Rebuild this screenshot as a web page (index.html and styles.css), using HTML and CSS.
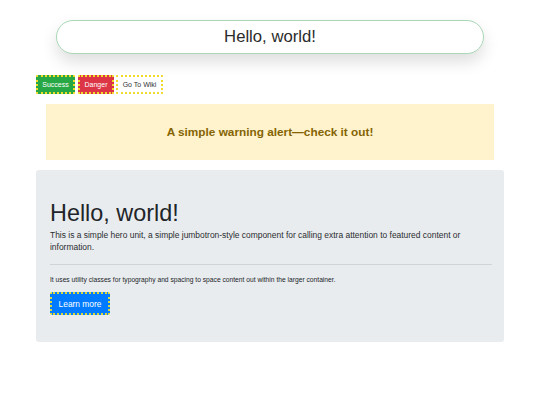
FILE: index.html
```html
<!DOCTYPE html>
<html lang="en">
<head>
    <meta charset="UTF-8">
    <meta name="viewport" content="width=device-width, initial-scale=1.0">
    <title>Hello, world!</title>
    <link rel="stylesheet" href="styles.css">
</head>
<body>

    <!-- Title box -->
    <div class="title-wrap">
        <div class="title-box">Hello, world!</div>
    </div>

    <!-- Buttons -->
    <div class="btn-row">
        <button class="btn btn-success">Success</button>
        <button class="btn btn-danger">Danger</button>
        <button class="btn btn-light">Go To Wiki</button>
    </div>

    <!-- Alert -->
    <div class="alert-warning">A simple warning alert&mdash;check it out!</div>

    <!-- Jumbotron -->
    <div class="jumbotron">
        <h1>Hello, world!</h1>
        <p class="lead">This is a simple hero unit, a simple jumbotron-style component for calling extra attention to featured content or information.</p>
        <hr>
        <p class="small">It uses utility classes for typography and spacing to space content out within the larger container.</p>
        <button class="btn-primary">Learn more</button>
    </div>

</body>
</html>
```

FILE: styles.css
```css
body {
    font-family: "Liberation Sans", Arial, sans-serif;
    margin: 0;
    padding: 0;
    background-color: #fff;
    color: #212529;
}

/* Title box */
.title-wrap {
    padding: 20px 56px 0;
}

.title-box {
    height: 32px;
    line-height: 32px;
    border: 1px solid #a9d8b6;
    border-radius: 17px;
    text-align: center;
    font-size: 16.7px;
    color: #2b2b2b;
    background-color: #fff;
    box-shadow: 0 8px 16px rgba(0, 0, 0, 0.13);
}

/* Buttons */
.btn-row {
    display: flex;
    gap: 3px;
    margin: 21px 0 0 36px;
}

.btn {
    font-family: inherit;
    font-size: 7px;
    height: 19px;
    padding: 0 4px;
    border: 2px dotted #f2dc2a;
    border-radius: 1px;
    cursor: pointer;
}

.btn-success {
    width: 39px;
    background-color: #28a745;
    color: #fff;
}

.btn-danger {
    width: 36px;
    background-color: #dc3545;
    color: #fff;
}

.btn-light {
    width: 47px;
    margin-left: -1px;
    background-color: #fff;
    color: #333;
}

/* Alert */
.alert-warning {
    margin: 10px 46px 0;
    height: 56px;
    line-height: 56px;
    text-align: center;
    font-size: 11.8px;
    font-weight: bold;
    color: #856404;
    background-color: #fff3cd;
}

/* Jumbotron */
.jumbotron {
    margin: 10px 36px 0;
    padding: 29px 12px 27px 14px;
    background-color: #e9ecef;
    border-radius: 3px;
}

.jumbotron h1 {
    margin: 0;
    font-size: 23.4px;
    font-weight: 300;
    line-height: 1.2;
}

.jumbotron .lead {
    margin: 2px 0 0;
    font-size: 8.45px;
    line-height: 12px;
    color: #2a2d30;
}

.jumbotron hr {
    margin: 11px 0 0;
    border: 0;
    border-top: 1px solid rgba(0, 0, 0, 0.1);
}

.jumbotron .small {
    margin: 10px 0 0;
    font-size: 6.7px;
    line-height: 10px;
}

.btn-primary {
    display: block;
    margin-top: 7px;
    width: 60px;
    height: 23px;
    padding: 0;
    font-family: inherit;
    font-size: 8.4px;
    color: #fff;
    background-color: #007bff;
    border: 2px dotted #d8d83a;
    border-radius: 2px;
    cursor: pointer;
}
```
